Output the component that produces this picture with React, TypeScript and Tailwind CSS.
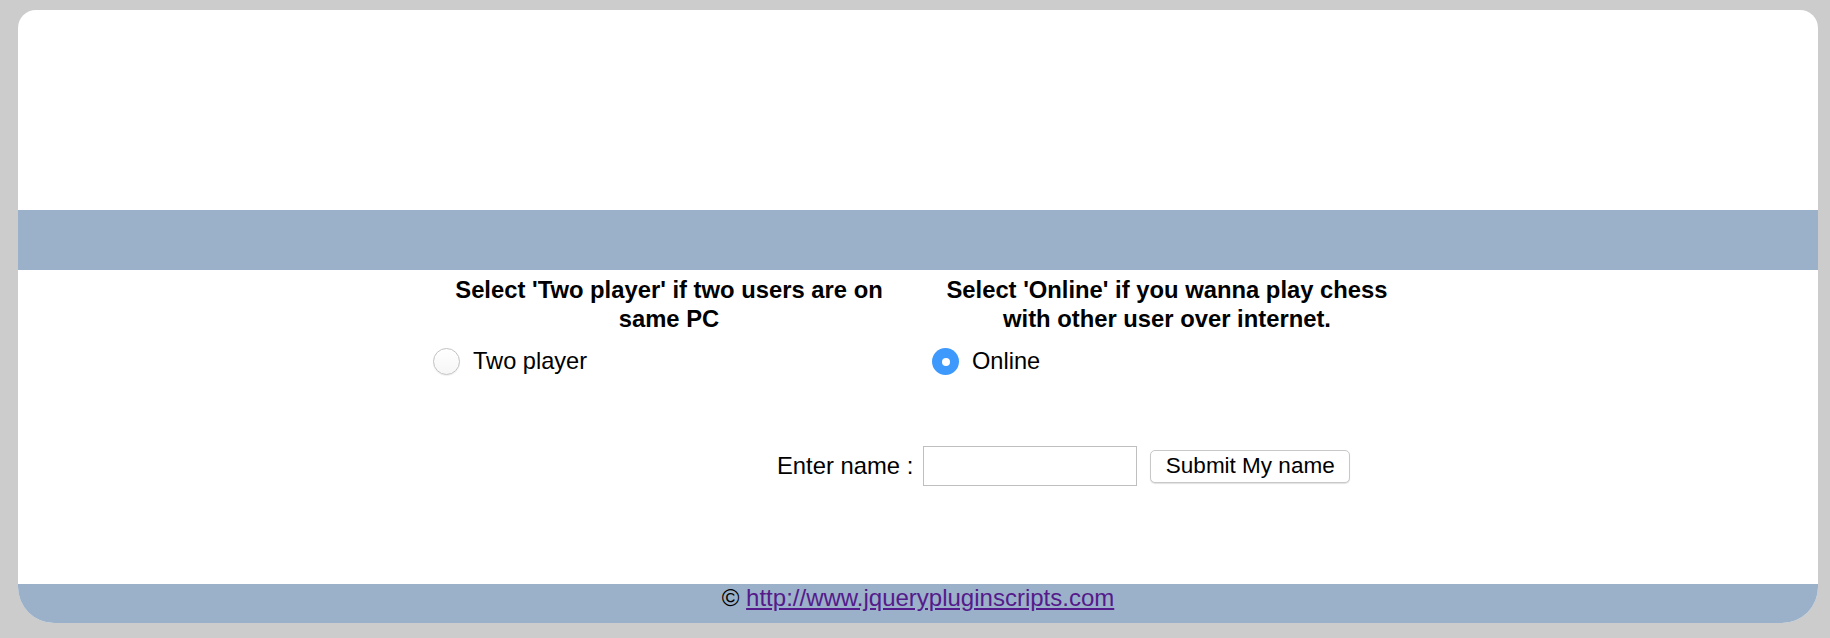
import { useState } from "react";

const font = { fontFamily: '"Liberation Sans", Arial, Helvetica, sans-serif' };

const Radio = ({ checked, onClick }: { checked: boolean; onClick: () => void }) =>
  checked ? (
    <span onClick={onClick} className="w-[27px] h-[27px] rounded-full bg-[#3d99fb] flex items-center justify-center shrink-0">
      <span className="w-[8px] h-[8px] rounded-full bg-white" />
    </span>
  ) : (
    <span onClick={onClick} className="w-[27px] h-[27px] rounded-full border border-[#c2c2c2] bg-gradient-to-b from-white to-[#f6f6f6] shadow-[0_1px_1px_rgba(0,0,0,0.06)] shrink-0" />
  );

const App = () => {
  const [mode, setMode] = useState("online");

  return (
    <div className="w-full h-[638px] bg-[#cccccc] pt-[10px] pl-[18px] pr-[12px] pb-[15px]" style={font}>
      <div className="h-[613px] bg-white rounded-t-[18px] rounded-b-[36px] overflow-hidden flex flex-col text-black">
        <div className="h-[200px] shrink-0" />
        <div className="h-[60px] shrink-0 bg-[#9bb1c9]" />

        <div className="w-[996px] mx-auto grid grid-cols-2 mt-[5px]">
          <div>
            <div className="px-[14px] text-center font-bold text-[23.8px] leading-[29px]">
              Select 'Two player' if two users are on same PC
            </div>
            <label className="flex items-center gap-[13px] pl-[13px] mt-[15px]">
              <Radio checked={mode === "two"} onClick={() => setMode("two")} />
              <span className="text-[23.6px] leading-none">Two player</span>
            </label>
          </div>
          <div>
            <div className="px-[14px] text-center font-bold text-[23.8px] leading-[29px]">
              Select 'Online' if you wanna play chess with other user over internet.
            </div>
            <label className="flex items-center gap-[13px] pl-[14px] mt-[15px]">
              <Radio checked={mode === "online"} onClick={() => setMode("online")} />
              <span className="text-[23.6px] leading-none">Online</span>
            </label>
          </div>
        </div>

        <div className="flex items-center pl-[759px] mt-[71px] text-[23.8px]">
          <span>Enter name :</span>
          <input type="text" className="ml-[10px] w-[214px] h-[40px] border border-[#bfbfbf] bg-white outline-none px-2" />
          <button className="ml-[13px] w-[200px] h-[33px] border border-[#c8c8c8] rounded-[5px] bg-white shadow-[0_1px_1px_rgba(0,0,0,0.12)] text-[22.5px] leading-none">
            Submit My name
          </button>
        </div>

        <div className="flex-1" />
        <div className="h-[39px] shrink-0 bg-[#9bb1c9] text-center text-[24px] leading-[28px]">
          © <a href="#" className="text-[#551a8b] underline">http://www.jquerypluginscripts.com</a>
        </div>
      </div>
    </div>
  );
};

export default App;
